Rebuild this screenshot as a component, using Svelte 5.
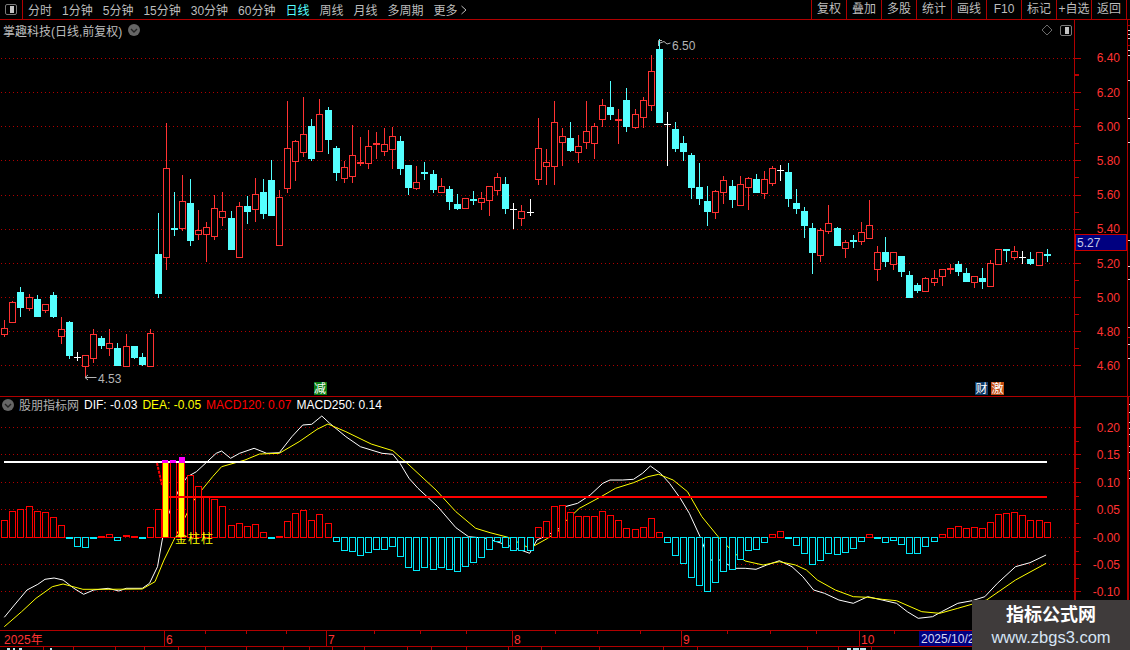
<script>
  const c = [
    ['r',320,328.3,333.7,336],['r',301.3,302.3,321.7,321.7],['c',287.3,292,306.7,315.7],['r',294.3,297.3,307.7,310],['c',295,299,315.7,315.7],['r',304,304.3,309.7,311.7],['c',292.3,295,315.7,316.7],['r',317,329.3,336.3,342.7],['c',321,322,355,357.7],['w',352,357,357,360],
    ['r',355,355.3,365.7,376.7],['r',329.3,334.3,358.3,361.7],['c',336,338.3,345,347.7],['r',329.3,343.3,348.3,355],['c',343.3,348.3,365,365],['r',334,346.3,365.7,365.7],['c',346,346,356.7,357.7],['c',353.3,357.3,363.7,365],['r',329.3,333.3,365.7,365.7],['c',213.3,254,292.7,296.7],
    ['r',123.3,168.3,256.7,269],['c',192,228.3,230,235],['r',175,201.3,228.3,230],['c',179,203,240,245],['r',210,230.3,233.7,239.3],['r',222,227.3,233.7,261],['r',195,208.3,235.7,239],['r',192,211.3,216.7,225],['c',211,218,249,249],['r',202,206.3,256.7,256.7],
    ['c',196,206,211,222.7],['r',178.3,194.3,209.3,221],['c',179,192,212.7,217.7],['c',160,180,215,215],['r',190,196.7,244.7,244.7],['r',101.3,148.3,187.7,191.7],['r',140,141.3,160.7,180],['r',97,134.3,151.7,155.7],['c',119.3,126,157.7,160],['r',99,114.3,150.7,150.7],
    ['c',107.3,110,138.7,152.7],['c',146,148,171.7,180],['r',161.3,167.3,177.7,181.7],['r',125.3,155.3,175.7,181.7],['r',137,162.3,163.6,165],['r',130,146.3,162.7,167.7],['r',132,143.3,144.8,157.7],['r',128,144.3,150.7,155],['r',127,136.3,148.7,167.7],['c',136,141,167.7,174],
    ['c',165,165,186.7,194],['r',166,182.3,187.7,188.7],['c',162.3,172.3,173.8,179],['c',170,174,189,191.7],['r',177.7,186.3,191.7,191.7],['c',186,189,201,209],['c',194,204,207.7,209],['r',198,198.3,208.3,208.3],['c',191,199.3,201.3,204],['r',192,198.3,201.7,209],
    ['r',186,186.3,200,215],['r',173,177.3,190,194],['c',177,184,207.7,212.7],['w',203.3,209,209,227.7],['r',205,211.3,218.3,225],['w',199,212,212,215],['r',118,148.3,179.3,184],['r',149,162.3,165.7,184],['r',101.3,122.3,165.7,184],['r',128.3,136.3,141.7,165],
    ['c',122,138,150,151],['r',135,146.3,151.7,161.7],['r',101,131.3,141.7,147.7],['r',123.3,126.3,143.3,157.7],['r',99,105.3,119.3,126],['c',81,107,114,118.7],['r',109,119,120.3,142.7],['c',88,100,126,130.7],['r',109,114.3,126.7,128.3],['r',97.3,100,117.3,126.7],
    ['r',55,71.3,105.3,110],['c',39.3,49,122,122],['w',112.3,124.3,124.3,165],['c',122,129.3,147.7,150.7],['c',136,143,150.7,160],['c',153.3,155,186.7,197.7],['c',163,187,198,204],['c',186,201,211,225],['r',190,191.3,211.7,218],['r',176,180.3,191.7,203],
    ['c',180,186,199,207],['r',176.3,184.3,204.7,204.7],['r',176.7,177.7,186.7,208.7],['c',174,179,191.7,192],['r',171,179.3,192.7,197.7],['r',166,167.7,182.7,185.3],['w',165,170,170,180],['c',163,172,197.7,206],['c',188.7,203,207.7,212.7],['c',207,211,225,236.7],
    ['c',223.3,228,251.7,272.7],['r',228,230.3,254.7,261],['r',205,223.3,230.7,232.7],['c',227.3,228,244.7,244.7],['r',240,242.3,247.7,256.7],['c',235,240,241.7,246.7],['r',222.3,232.3,240.7,243.7],['r',200,225.3,237.7,237.7],['r',246,252.3,268.7,280],['c',237,252.3,261,266],
    ['r',252.3,252.3,263.7,269],['c',256,256,271,276],['c',271,275,296.7,296.7],['c',283,285,290,291.7],['r',277.3,278.3,290.7,290.7],['r',270,278,281.7,285],['r',269.3,269.3,275.7,285],['r',264,268.3,269.7,272.7],['c',261,264,271,274.7],['c',268.3,273,281,281],
    ['r',276.3,276.3,281.7,287],['c',268.3,278.3,281,288],['r',260.3,263.3,285.7,285.7],['r',249.3,249.3,263.7,263.7],['c',249.3,249.3,251.7,261],['r',246.3,251.3,257,259],['w',251.3,256.7,256.7,262.7],['c',252.3,259,263,264],['r',252.3,252.3,264.7,264.7],['c',249.3,254,255.7,261]
  ];
  const hist = [301,273,267,259,273,277,292,316,356,378,380,356,349,343,361,346,349,353,322,268,0,0,0,165,199,232,238,259,316,310,319,313,337,356,349,304,280,271,301,283,310,364,391,394,406,397,388,388,379,409,442,451,442,448,442,448,454,439,427,412,388,364,382,391,391,391,322,304,259,256,
    277,289,289,289,274,286,301,325,328,322,295,337,367,406,430,472,496,514,487,454,448,418,391,388,367,343,334,356,376,400,433,421,400,403,397,385,364,343,356,367,361,373,400,400,379,364,343,325,319,325,322,325,307,283,280,277,286,301,301,307];
  const cx = (i) => Math.round(4.3 + 8.08 * i);
  const ys = (v) => Math.round(v);
  const bars = hist.map((z, i) => {
    if (z === 0) return null;
    const y = Math.round(420 + z / 3);
    const zero = 537;
    const red = z < 352;
    const top = red ? y : zero;
    const h = red ? zero - y : y - zero;
    return { x: cx(i) - 3, y: top, h: Math.max(h, 1), red, flat: h <= 2 };
  }).filter(Boolean);

  const L5 = (a) => a.map(([x, y]) => `${(x / 2.775).toFixed(1)},${(420 + y / 3).toFixed(1)}`);
  const L6 = (a) => a.map(([x, y]) => `${(565 + x / 2.775).toFixed(1)},${(420 + y / 3).toFixed(1)}`);
  const dif = [...L5([[12,592],[40,555],[75,510],[105,493],[125,478],[150,474],[175,480],[205,505],[232,523],[260,510],[300,505],[330,513],[350,505],[395,505],[415,490],[437,440],[450,360],[465,290],[480,250],[500,200],[520,170],[545,155],[575,125],[600,100],[615,93],[640,115],[665,100],[705,85],[740,100],[775,98],[810,50],[840,15],[865,13],[893,-12],[915,10],[960,50],[1000,80],[1060,100],[1090,103],[1110,130],[1135,175],[1160,205],[1215,260],[1265,323],[1300,350],[1350,355],[1420,380],[1470,400],[1490,360],[1520,345],[1560,320]]),
    ...L6([[0,260],[35,250],[70,225],[105,190],[125,180],[160,180],[190,178],[215,160],[237,138],[265,160],[290,190],[320,235],[345,280],[375,350],[400,420],[430,420],[470,445],[500,445],[530,448],[560,435],[595,422],[630,440],[660,470],[690,510],[720,520],[760,540],[800,550],[840,530],[880,540],[920,550],[950,575],[980,595],[1020,590],[1045,575],[1090,550],[1130,542],[1165,530],[1200,490],[1250,440],[1290,428],[1335,405]])].join(' ');
  const dea = [...L5([[12,620],[60,575],[100,535],[145,500],[175,492],[230,508],[300,508],[395,507],[430,485],[455,420],[480,365],[535,245],[560,210],[590,170],[615,140],[680,120],[720,102],[775,100],[830,65],[880,28],[910,12],[960,35],[1030,72],[1090,92],[1130,130],[1210,210],[1265,275],[1320,325],[1360,338],[1410,352],[1470,385],[1520,355],[1560,325]]),
    ...L6([[0,305],[40,265],[100,230],[140,205],[190,188],[230,170],[260,163],[300,180],[340,215],[380,290],[425,350],[470,400],[500,423],[550,435],[595,425],[640,435],[670,450],[700,480],[750,510],[800,530],[840,532],[880,538],[920,542],[990,575],[1040,580],[1090,565],[1170,540],[1250,480],[1335,430]])].join(' ');

  const priceGrid = [[57.5,'6.40'],[92,'6.20'],[126,'6.00'],[160,'5.80'],[194.5,'5.60'],[228.5,'5.40'],[263,'5.20'],[297,'5.00'],[331,'4.80'],[365,'4.60']];
  const macdGrid = [[427,'0.20'],[454,'0.15'],[482,'0.10'],[509,'0.05'],[537,'-0.00'],[564,'-0.05'],[591,'-0.10']];
  const priceMinor = priceGrid.slice(0, -1).map((g, i) => (g[0] + priceGrid[i + 1][0]) / 2);
  const macdMinor = macdGrid.slice(0, -1).map((g, i) => (g[0] + macdGrid[i + 1][0]) / 2);
  const periods = ['分时','1分钟','5分钟','15分钟','30分钟','60分钟','日线','周线','月线','多周期','更多'];
  const actions = ['复权','叠加','多股','统计','画线','F10','标记','+自选','返回'];
  const months = [[164,'6'],[326,'7'],[512,'8'],[681,'9'],[859,'10']];
  const smallTicks = [205,246,286,374,420,466,555,597,640,727,770,816,894];
  const stripTicks = [43,73,115,144,178,205,246,283,309,332,364,407,431,466,508,541,599,663,697,807,838,871];
  const edgeTicks = [404,412,422,428,434,446,452,470,478];
  const priceEdgeWhite = [30,34,38,50,55,80,118,142,240,266,279,327,344,358];
  const priceEdgeRed = [25,45,337];
  const fragments = [[7,3],[13,2],[19,3],[50,2],[847,4],[853,6],[860,6]];
</script>

<div class="app">
  <header class="toolbar">
    <div class="toggle"><span class="toggle-icon"><i></i></span></div>
    <nav class="periods">
      {#each periods as p}
        <span class:active={p === '日线'}>{p}{#if p === '更多'}<svg class="more" width="8" height="10" viewBox="0 0 8 10"><path d="M1.5 1 L6 5 L1.5 9" fill="none" stroke="#bbb"/></svg>{/if}</span>
      {/each}
    </nav>
    <div class="actions">
      {#each actions as a}<span>{a}</span>{/each}
    </div>
  </header>

  <section class="panel price">
    <div class="plot">
      <svg width="1075" height="376" viewBox="0 20 1075 376" shape-rendering="crispEdges">
        {#each priceGrid as g}
          <line x1="1" x2="1075" y1={ys(g[0]) + .5} y2={ys(g[0]) + .5} class="grid" />
        {/each}
        {#each c as k, i}
          {@const x = cx(i)}
          {@const col = k[0] === 'r' ? '#ff3232' : k[0] === 'c' ? '#54ffff' : '#ffffff'}
          <line x1={x + .5} x2={x + .5} y1={ys(k[1])} y2={ys(k[4]) + 1} stroke={col} />
          {#if k[0] === 'w'}
            <line x1={x - 3} x2={x + 4} y1={ys(k[2]) + .5} y2={ys(k[2]) + .5} stroke={col} />
          {:else if k[3] - k[2] < 2.5}
            <rect x={x - 3} y={ys(k[2])} width="7" height="2" fill={col} />
          {:else if k[0] === 'c'}
            <rect x={x - 3} y={ys(k[2])} width="7" height={ys(k[3]) - ys(k[2]) + 1} fill={col} />
          {:else}
            <rect x={x - 2.5} y={ys(k[2]) + .5} width="6" height={ys(k[3]) - ys(k[2])} fill="#000" stroke={col} />
          {/if}
        {/each}
        <path d="M658.5 46 V40.5 H662 M660 43 L664 41.5 L667 44 L670.5 43" fill="none" stroke="#b4b4b4" shape-rendering="auto" />
        <text x="672" y="49.5" class="note">6.50</text>
        <path d="M85 377.5 H96.5 M85 377.5 L88 375 M85 377.5 L88 380" fill="none" stroke="#b4b4b4" shape-rendering="auto" />
        <text x="98" y="383" class="note">4.53</text>
        <rect x="313.5" y="382" width="13" height="13" fill="#0b7d12" />
        <text x="314" y="393" class="badge">减</text>
        <rect x="975" y="382" width="13" height="13" fill="#103c68" />
        <text x="975.5" y="393" class="badge">财</text>
        <rect x="991" y="382" width="13" height="13" fill="#c24c12" />
        <text x="991.5" y="393" class="badge">激</text>
      </svg>
      <div class="title">
        <span>掌趣科技(日线,前复权)</span>
        <svg width="12" height="12" viewBox="0 0 12 12"><circle cx="6" cy="6" r="6" fill="#666" /><path d="M3 5 L6 8 L9 5" fill="none" stroke="#222" stroke-width="1.4" /></svg>
      </div>
      <div class="corner">
        <svg width="12" height="12" viewBox="0 0 12 12"><path d="M6 1 L11 6 L6 11 L1 6 Z" fill="none" stroke="#6a6a6a" /></svg>
        <span class="toggle-icon"><i></i></span>
      </div>
    </div>
    <div class="axis">
      <svg width="52" height="376" viewBox="1075 20 52 376">
        {#each priceGrid as g}
          <line x1="1075" x2="1081" y1={ys(g[0]) + .5} y2={ys(g[0]) + .5} class="tick" />
          <text x="1120" y={g[0] + 4.5} class="num" text-anchor="end">{g[1]}</text>
        {/each}
        {#each priceMinor as y}
          <line x1="1075" x2="1079" y1={ys(y) + .5} y2={ys(y) + .5} class="tick" />
        {/each}
        <line x1="1075" x2="1079" y1="74.5" y2="74.5" class="tick" />
        <rect x="1075.5" y="234.5" width="51" height="16" fill="#000080" stroke="#c80000" />
        <text x="1077" y="247" class="cur">5.27</text>
      </svg>
    </div>
    <div class="edge price-edge">
      <svg width="3" height="376" viewBox="1127 20 3 376" shape-rendering="crispEdges">
        {#each priceEdgeWhite as y}<line x1="1127" x2="1130" y1={y + .5} y2={y + .5} stroke="#ddd" />{/each}
        {#each priceEdgeRed as y}<line x1="1127" x2="1130" y1={y + .5} y2={y + .5} stroke="#b80000" />{/each}
      </svg>
    </div>
  </section>

  <section class="panel macd">
    <div class="plot">
      <svg width="1075" height="233" viewBox="0 397 1075 233" shape-rendering="crispEdges">
        {#each macdGrid as g}
          <line x1="1" x2="1075" y1={g[0] + .5} y2={g[0] + .5} class="grid" />
        {/each}
        <polyline points={dif} fill="none" stroke="#fff" stroke-width="1" shape-rendering="auto" />
        <polyline points={dea} fill="none" stroke="#ff0" stroke-width="1" shape-rendering="auto" />
        {#each bars as b}
          {#if b.flat}
            <rect x={b.x} y={b.y} width="7" height="2" fill={b.red ? '#f00' : '#00f0ff'} />
          {:else}
            <rect x={b.x + .5} y={b.y + .5} width="6" height={b.h} fill="#000" stroke={b.red ? '#f00' : '#00e8f8'} />
          {/if}
        {/each}
        <rect x="162.5" y="462.5" width="6" height="75" fill="#ff0" stroke="#f00" />
        <rect x="170.5" y="462.5" width="6" height="75" fill="#000" stroke="#f00" />
        <rect x="178.5" y="462.5" width="6" height="75" fill="#ff0" stroke="#f00" />
        <line x1="168" x2="1047" y1="497" y2="497" stroke="#f00" stroke-width="2" />
        <line x1="4" x2="1047" y1="462" y2="462" stroke="#fff" stroke-width="2" />
        <rect x="162" y="460" width="6" height="3" fill="#f0f" />
        <rect x="170" y="460" width="6" height="3" fill="#f0f" />
        <rect x="179" y="457" width="6" height="6" fill="#f0f" />
        <line x1="157" y1="463" x2="162" y2="485" stroke="#f00" stroke-width="2" stroke-dasharray="3 1" shape-rendering="auto" />
        <text x="175" y="543" class="gold">金柱柱</text>
      </svg>
      <div class="legend">
        <svg width="12" height="12" viewBox="0 0 12 12"><circle cx="6" cy="6" r="6" fill="#666" /><path d="M3 5 L6 8 L9 5" fill="none" stroke="#222" stroke-width="1.4" /></svg>
        <span class="gray">股朋指标网</span>
        <span class="white">DIF: -0.03</span>
        <span class="yellow">DEA: -0.05</span>
        <span class="red">MACD120: 0.07</span>
        <span class="white">MACD250: 0.14</span>
      </div>
    </div>
    <div class="axis">
      <svg width="52" height="233" viewBox="1076 397 52 233">
        {#each macdGrid as g}
          <line x1="1076" x2="1081" y1={g[0] + .5} y2={g[0] + .5} class="tick" />
          <text x="1120" y={g[0] + 4.5} class="num" text-anchor="end">{g[1]}</text>
        {/each}
        {#each macdMinor as y}
          <line x1="1076" x2="1079" y1={ys(y) + .5} y2={ys(y) + .5} class="tick" />
        {/each}
      </svg>
    </div>
    <div class="edge macd-edge">
      <svg width="3" height="233" viewBox="1127 397 3 233">
        {#each edgeTicks as y}<line x1="1127" x2="1130" y1={y + .5} y2={y + .5} stroke="#ddd" />{/each}
      </svg>
    </div>
  </section>

  <section class="timeaxis">
    <svg width="1130" height="15" viewBox="0 631 1130 15" shape-rendering="crispEdges">
      <text x="4" y="644" class="num">2025年</text>
      {#each months as m}
        <line x1={m[0] + .5} x2={m[0] + .5} y1="631" y2="646" class="tick" />
        <text x={m[0] + 2} y="644" class="num">{m[1]}</text>
      {/each}
      {#each smallTicks as x}
        <line x1={x + .5} x2={x + .5} y1="631" y2="634" class="tick" />
      {/each}
      <rect x="919" y="631" width="110" height="15" fill="#000080" />
      <text x="921" y="643" class="date">2025/10/28</text>
    </svg>
  </section>

  <section class="strip">
    <svg width="1130" height="3" viewBox="0 647 1130 3" shape-rendering="crispEdges">
      {#each stripTicks as x}
        <line x1={x + .5} x2={x + .5} y1="647" y2="650" class="tick" />
      {/each}
      {#each fragments as f}
        <rect x={f[0]} y="648" width={f[1]} height="2" fill="#b8e8ee" />
      {/each}
    </svg>
  </section>

  <aside class="mark">
    <strong>指标公式网</strong>
    <span>www.zbgs3.com</span>
  </aside>
</div>

<style>
  :global(body) { margin: 0; background: #000; }
  .app {
    position: relative;
    width: 1130px;
    height: 650px;
    overflow: hidden;
    background: #000;
    font: 12px "Liberation Sans", "Noto Sans CJK SC", sans-serif;
    color: #bdbdbd;
  }
  svg { display: block; }
  .toolbar {
    display: flex;
    align-items: center;
    height: 19px;
    border-bottom: 1px solid #b00000;
    padding-right: 3px;
  }
  .toggle {
    display: flex;
    align-items: center;
    justify-content: center;
    width: 23px;
    height: 19px;
    border-right: 1px solid #b00000;
    box-sizing: border-box;
  }
  .toggle-icon {
    display: flex;
    justify-content: flex-end;
    box-sizing: border-box;
    width: 12px;
    height: 11px;
    padding: 1px 2px 1px 0;
    border: 1px solid #7a7a7a;
    border-radius: 2px;
  }
  .toggle-icon i { display: block; width: 4px; background: #c4c4c4; }
  .periods { display: flex; gap: 10px; padding-left: 5px; }
  .periods span { display: flex; align-items: center; gap: 2px; white-space: nowrap; }
  .periods .active { color: #54ffff; }
  .actions { display: flex; margin-left: auto; border-right: 1px solid #b00000; }
  .actions span {
    width: 35px;
    height: 19px;
    line-height: 19px;
    box-sizing: border-box;
    border-left: 1px solid #b00000;
    text-align: center;
    white-space: nowrap;
  }
  .panel { display: flex; border-bottom: 1px solid #b00000; }
  .price { height: 376px; }
  .macd { height: 233px; }
  .plot { position: relative; width: 1075px; }
  .axis { width: 52px; }
  .price .axis { border-left: 1px solid #b00000; margin-left: -1px; }
  .macd .axis { border-left: 2px solid #b00000; margin-left: -1px; width: 51px; }
  .edge { flex: 1; }
  .price-edge { border-left: 1px solid #b00000; }
  .macd-edge { border-left: 2px solid #b00000; margin-left: 0; }
  .title {
    position: absolute;
    left: 3px;
    top: 2px;
    display: flex;
    align-items: center;
    gap: 6px;
    height: 16px;
    white-space: nowrap;
  }
  .corner {
    position: absolute;
    right: 3px;
    top: 4px;
    display: flex;
    align-items: center;
    gap: 7px;
  }
  .legend {
    position: absolute;
    left: 2px;
    top: 0;
    display: flex;
    align-items: center;
    gap: 5px;
    height: 15px;
    white-space: nowrap;
  }
  .gray { color: #b0b0b0; }
  .white { color: #fff; }
  .yellow { color: #ff0; }
  .red { color: #f00; }
  .grid { stroke: #b00000; stroke-dasharray: 1 3; }
  .tick { stroke: #b80000; }
  .num { fill: #ff3232; font-size: 12px; }
  .cur { fill: #c8c8e6; font-size: 12px; }
  .date { fill: #d8d8f0; font-size: 12px; }
  .note { fill: #b4b4b4; font-size: 12px; }
  .badge { fill: #fff; font-size: 12px; }
  .gold { fill: #ff0; font-size: 12px; letter-spacing: 1px; }
  .timeaxis { height: 15px; border-bottom: 1px solid #b00000; }
  .strip { height: 3px; overflow: hidden; }
  .mark {
    position: absolute;
    left: 972px;
    top: 600px;
    width: 158px;
    height: 50px;
    display: flex;
    flex-direction: column;
    align-items: center;
    background: #3f3b3b;
    color: #fff;
  }
  .mark strong { font-size: 18px; line-height: 24px; margin-top: 3px; }
  .mark span { font-size: 16.5px; line-height: 20px; color: #d6e4f4; }
</style>
